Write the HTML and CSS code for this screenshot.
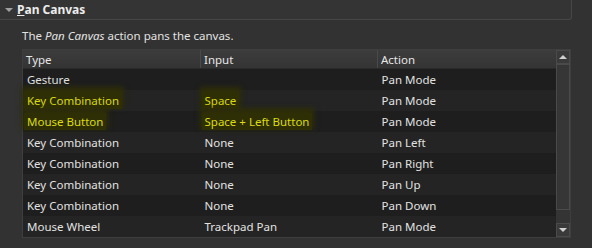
FILE: index.html
```html
<!DOCTYPE html>
<html lang="en">

<head>
  <meta charset="UTF-8">
  <title>Pan Canvas</title>
  <link rel="stylesheet" href="styles.css">
</head>

<body>
  <div class="section">
    <div class="section-head">
      <span class="arrow"></span>
      <span class="title"><u>P</u>an Canvas</span>
    </div>
    <p class="desc">The <i>Pan Canvas</i> action pans the canvas.</p>

    <div class="grid-wrap">
      <table class="shortcuts">
        <thead>
          <tr>
            <th class="col-type">Type</th>
            <th class="col-input">Input</th>
            <th class="col-action">Action</th>
          </tr>
        </thead>
        <tbody>
          <tr><td>Gesture</td><td></td><td>Pan Mode</td></tr>
          <tr class="hl"><td><span class="mark">Key Combination</span></td><td><span class="mark">Space</span></td><td>Pan Mode</td></tr>
          <tr class="hl"><td><span class="mark">Mouse Button</span></td><td><span class="mark">Space + Left Button</span></td><td>Pan Mode</td></tr>
          <tr><td>Key Combination</td><td>None</td><td>Pan Left</td></tr>
          <tr><td>Key Combination</td><td>None</td><td>Pan Right</td></tr>
          <tr><td>Key Combination</td><td>None</td><td>Pan Up</td></tr>
          <tr><td>Key Combination</td><td>None</td><td>Pan Down</td></tr>
          <tr><td>Mouse Wheel</td><td>Trackpad Pan</td><td>Pan Mode</td></tr>
        </tbody>
      </table>
      <div class="scrollbar">
        <div class="sb-btn up"></div>
        <div class="sb-track"><div class="sb-handle"></div></div>
        <div class="sb-btn down"></div>
      </div>
    </div>
  </div>
</body>

</html>
```

FILE: styles.css
```css
body {
  margin: 0;
  background-color: #323232;
  color: #e2e2e2;
  font-family: "Noto Sans", "Open Sans", sans-serif;
  font-size: 11.5px;
  height: 248px;
  overflow: hidden;
}

.section {
  width: 572px;
}

.section-head {
  display: flex;
  align-items: center;
  height: 20px;
  box-sizing: border-box;
  border: 1px solid #474747;
  border-top: none;
  border-left: none;
  border-radius: 0 0 3px 0;
  background-color: #343434;
  padding-left: 5px;
  font-size: 12px;
}

.arrow {
  width: 0;
  height: 0;
  border-left: 4px solid transparent;
  border-right: 4px solid transparent;
  border-top: 4px solid #a0a0a0;
  margin-right: 4px;
  margin-top: 1px;
}

.title {
  font-weight: bold;
  color: #ececec;
}

.desc {
  margin: 7px 0 0 22px;
  height: 22px;
  line-height: 18px;
}

.grid-wrap {
  display: flex;
  margin-left: 22px;
  border: 1px solid #3e3e3e;
  width: 549px;
  box-sizing: border-box;
  background-color: #2a2a2a;
}

table.shortcuts {
  border-collapse: collapse;
  width: 535px;
  table-layout: fixed;
}

th {
  background: linear-gradient(#3c3c3c, #343434);
  font-weight: normal;
  text-align: left;
  height: 18px;
  padding: 0 0 0 3px;
  border-right: 1px solid #4a4a4a;
  border-bottom: 1px solid #2a2a2a;
  color: #e6e6e6;
}

th.col-type {
  width: 174px;
}

th.col-input {
  width: 173px;
}

th.col-action {
  border-right: none;
}

td {
  height: 21px;
  padding: 0 0 0 4px;
  white-space: nowrap;
  overflow: visible;
}

tbody tr:nth-child(odd) {
  background-color: #1e1e1e;
}

tbody tr:nth-child(even) {
  background-color: #242424;
}

.mark {
  color: #dcdc0a;
  background-color: #2f2f06;
  box-shadow: 0 -3px 5px 2px #2e2e07;
  padding: 1px 3px;
  margin-left: -3px;
}

.scrollbar {
  width: 14px;
  display: flex;
  flex-direction: column;
  background-color: #343434;
}

.sb-btn {
  height: 12px;
  border: 1px solid #4a4a4a;
  background-color: #3a3a3a;
  display: flex;
  align-items: center;
  justify-content: center;
}

.sb-btn.up::after {
  content: "";
  border-left: 4px solid transparent;
  border-right: 4px solid transparent;
  border-bottom: 4px solid #d0d0d0;
}

.sb-btn.down::after {
  content: "";
  border-left: 4px solid transparent;
  border-right: 4px solid transparent;
  border-top: 4px solid #d0d0d0;
}

.sb-track {
  flex: 1;
  padding: 0;
}

.sb-handle {
  height: 144px;
  border: 1px solid #4a4a4a;
  background-color: #363636;
}
```
